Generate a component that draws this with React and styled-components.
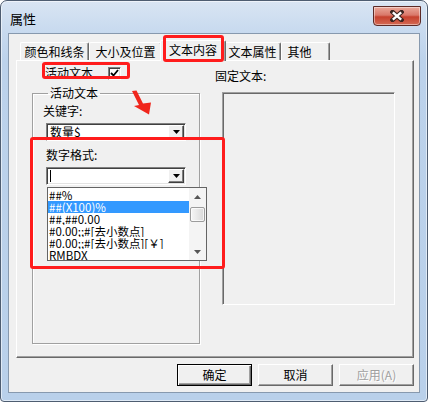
import React from 'react';
import styled, { createGlobalStyle } from 'styled-components';

const GlobalStyle = createGlobalStyle`
  html, body {
    margin: 0;
    padding: 0;
    background: #ffffff;
  }
  body {
    font-family: "Noto Sans CJK SC", "Liberation Sans", sans-serif;
    font-size: 12px;
    color: #000;
  }
`;

const formats = [
  '##%',
  '##(X100)%',
  '##,##0.00',
  '#0.00;;#[去小数点]',
  '#0.00;;#[去小数点][￥]',
  'RMBDX',
];

const tabs = [
  { label: '颜色和线条', w: 69 },
  { label: '大小及位置', w: 73 },
  { label: '文本内容', w: 66, active: true },
  { label: '文本属性', w: 57 },
  { label: '其他', w: 49, pr: 12 },
];

// window frame
const Window = styled.div`
  box-sizing: border-box;
  width: 428px;
  height: 402px;
  display: flex;
  flex-direction: column;
  padding: 0 7px 8px 7px;
  border: 1px solid #4e5d71;
  border-radius: 7px 7px 4px 4px;
  background: linear-gradient(180deg, #d9e5f3 0px, #c8daef 30px, #bcd2eb 60px, #b9d0ea 100%);
  box-shadow: inset 0 0 0 1px rgba(255, 255, 255, 0.55);
`;

const TitleBar = styled.div`
  height: 32px;
  flex: none;
  display: flex;
  justify-content: space-between;
  align-items: flex-start;
  padding-left: 2px;
`;

const Title = styled.div`
  margin-top: 10px;
  font-size: 13px;
  line-height: 16px;
  color: #000;
`;

const CloseButton = styled.div`
  width: 46px;
  height: 18px;
  margin: 5px -1px 0 0;
  display: flex;
  align-items: center;
  justify-content: center;
  border: 1px solid #5c2a26;
  border-radius: 0 0 4px 4px;
  background: linear-gradient(180deg, #eaa89a 0%, #d9786a 45%, #c6412e 55%, #d46a54 100%);
  box-shadow: inset 0 0 0 1px rgba(255, 255, 255, 0.45);
`;

const Client = styled.div`
  flex: 1;
  display: flex;
  flex-direction: column;
  padding: 6px 5px 0 7px;
  border: 1px solid #8799ae;
  background: #f0f0f0;
`;

// tabs
const TabRow = styled.div`
  position: relative;
  z-index: 1;
  height: 20px;
  display: flex;
  align-items: flex-end;
  padding-left: 4px;
`;

const Tab = styled.div`
  position: relative;
  box-sizing: border-box;
  width: ${(p) => p.$w}px;
  height: ${(p) => (p.$active ? 21 : 18)}px;
  margin: 0 ${(p) => (p.$active ? -2 : 0)}px ${(p) => (p.$active ? -1 : 0)}px;
  z-index: ${(p) => (p.$active ? 2 : 1)};
  display: flex;
  align-items: center;
  justify-content: center;
  padding-right: ${(p) => p.$pr || 0}px;
  padding-bottom: ${(p) => (p.$active ? 2 : 0)}px;
  border: 1px solid;
  border-bottom: none;
  border-color: #ffffff #696969 #696969 #ffffff;
  border-radius: 2px 2px 0 0;
  box-shadow: inset -1px 0 0 #a0a0a0;
  background: #f0f0f0;
  line-height: 14px;
  white-space: nowrap;

  ${(p) =>
    p.$active &&
    `
    &::after {
      content: '';
      position: absolute;
      left: 2px;
      top: -6px;
      width: 61px;
      height: 27px;
      box-sizing: border-box;
      border: 3px solid #ff1c1c;
      border-radius: 3px;
    }
  `}
`;

const Panel = styled.div`
  position: relative;
  box-sizing: border-box;
  height: 298px;
  flex: none;
  display: grid;
  grid-template-columns: 168px 180px;
  column-gap: 15px;
  align-items: start;
  padding-left: 15px;
  border: 1px solid;
  border-color: #ffffff #696969 #696969 #ffffff;
  box-shadow: inset -1px -1px 0 #a0a0a0;
  background: #f0f0f0;
`;

const Column = styled.div`
  display: flex;
  flex-direction: column;
  align-items: flex-start;
`;

const CheckRow = styled.label`
  position: relative;
  display: flex;
  align-items: center;
  gap: 15px;
  height: 14px;
  margin: 5px 0 0 13px;
  line-height: 14px;

  &::after {
    content: '';
    position: absolute;
    left: -3px;
    top: -4px;
    width: 88px;
    height: 17px;
    box-sizing: border-box;
    border: 3px solid #ff1c1c;
    border-radius: 3px;
  }
`;

const CheckBox = styled.span`
  box-sizing: border-box;
  width: 13px;
  height: 13px;
  display: flex;
  align-items: center;
  justify-content: center;
  border: 1px solid;
  border-color: #808080 #ffffff #ffffff #808080;
  box-shadow: inset 1px 1px 0 #404040, inset -1px -1px 0 #e3e3e3;
  background: #fff;
`;

const GroupBox = styled.fieldset`
  box-sizing: border-box;
  width: 168px;
  height: 258px;
  margin: 6px 0 0 0;
  padding: 3px 0 0 10px;
  border: 1px solid #a0a0a0;
  box-shadow: 1px 1px 0 #fff, inset 1px 1px 0 #fff;
  display: flex;
  flex-direction: column;
  align-items: flex-start;

  legend {
    margin-left: 5px;
    padding: 0 2px;
    line-height: 14px;
  }
`;

const Label = styled.div`
  line-height: 14px;
  margin: ${(p) => p.$top || 0}px 0 0 ${(p) => p.$indent || 0}px;
`;

const FormatSection = styled.div`
  position: relative;
  display: flex;
  flex-direction: column;
  align-items: flex-start;

  &::after {
    content: '';
    position: absolute;
    left: -13px;
    top: -4px;
    width: 195px;
    height: 132px;
    box-sizing: border-box;
    border: 3px solid #ff1c1c;
    border-radius: 3px;
    pointer-events: none;
  }
`;

const Combo = styled.div`
  position: relative;
  box-sizing: border-box;
  width: 140px;
  height: 18px;
  margin: ${(p) => p.$top || 0}px 0 0 ${(p) => p.$indent || 0}px;
  display: flex;
  align-items: center;
  padding: 0 1px 0 2px;
  border: 1px solid;
  border-color: #808080 #ffffff #ffffff #808080;
  box-shadow: inset 1px 1px 0 #404040, inset -1px -1px 0 #e3e3e3;
  background: #fff;
  line-height: 14px;
`;

const ComboText = styled.span`
  flex: 1;
  padding-left: 1px;
  white-space: nowrap;
`;

const Caret = styled.span`
  width: 1px;
  height: 12px;
  margin-left: 1px;
  background: #000;
  flex: none;
`;

const DropButton = styled.span`
  box-sizing: border-box;
  width: 16px;
  height: 14px;
  flex: none;
  display: flex;
  align-items: center;
  justify-content: center;
  border: 1px solid;
  border-color: #ffffff #404040 #404040 #ffffff;
  box-shadow: inset -1px -1px 0 #808080;
  background: #f0f0f0;
`;

const DropList = styled.div`
  position: absolute;
  z-index: 3;
  left: 0;
  top: 19px;
  box-sizing: border-box;
  width: 160px;
  height: 74px;
  display: flex;
  border: 1px solid #646464;
  background: #fff;
`;

const Items = styled.div`
  flex: 1;
  padding-top: 1px;
`;

const Item = styled.div`
  height: 12px;
  padding-left: 1px;
  line-height: 12px;
  font-size: 11.5px;
  white-space: nowrap;
  overflow: hidden;
  color: ${(p) => (p.$selected ? '#fff' : '#000')};
  background: ${(p) => (p.$selected ? '#3399ff' : 'transparent')};
`;

const ScrollBar = styled.div`
  width: 17px;
  flex: none;
  display: flex;
  flex-direction: column;
  align-items: center;
  background: #f4f4f4;
`;

const ScrollArrow = styled.div`
  height: 17px;
  width: 17px;
  display: flex;
  align-items: center;
  justify-content: center;
`;

const ScrollTrack = styled.div`
  flex: 1;
  width: 100%;
  display: flex;
  justify-content: center;
  padding-top: 2px;
`;

const Thumb = styled.div`
  box-sizing: border-box;
  width: 15px;
  height: 15px;
  border: 1px solid #9c9c9c;
  border-radius: 2px;
  background: linear-gradient(90deg, #f6f6f6 0%, #e8e8e8 50%, #d8d8d8 100%);
  box-shadow: inset 0 0 0 1px rgba(255, 255, 255, 0.7);
`;

const FixedBox = styled.div`
  box-sizing: border-box;
  width: 173px;
  height: 213px;
  margin: 9px 0 0 7px;
  border: 1px solid;
  border-color: #a0a0a0 #ffffff #ffffff #a0a0a0;
  box-shadow: inset 1px 1px 0 #696969;
  background: #f0f0f0;
`;

const ArrowMark = styled.svg`
  position: absolute;
  left: 112px;
  top: 28px;
  pointer-events: none;
`;

// bottom buttons
const ButtonRow = styled.div`
  display: flex;
  justify-content: flex-end;
  gap: 6px;
  margin-top: 6px;
`;

const Button = styled.div`
  box-sizing: border-box;
  width: 75px;
  height: 22px;
  display: flex;
  align-items: center;
  justify-content: center;
  border: 1px solid;
  border-color: ${(p) => (p.$default ? '#000' : '#ffffff #696969 #696969 #ffffff')};
  box-shadow: ${(p) =>
    p.$default
      ? 'inset 1px 1px 0 #fff, inset -1px -1px 0 #696969, inset -2px -2px 0 #a0a0a0'
      : 'inset -1px -1px 0 #a0a0a0'};
  background: #f0f0f0;
  line-height: 14px;
  color: ${(p) => (p.$disabled ? '#a0a0a0' : '#000')};
  text-shadow: ${(p) => (p.$disabled ? '1px 1px 0 #fff' : 'none')};
`;

const DownTriangle = () => (
  <svg width="7" height="4" viewBox="0 0 7 4">
    <path d="M0 0 H7 L3.5 4 Z" fill="#000" />
  </svg>
);

const App = () => {
  return (
    <>
      <GlobalStyle />
      <Window>
        <TitleBar>
          <Title>属性</Title>
          <CloseButton>
            <svg width="14" height="12" viewBox="0 0 14 12">
              <path d="M2.5 2 L11.5 10 M11.5 2 L2.5 10" stroke="#3b2420" strokeWidth="4.4" strokeLinecap="square" />
              <path d="M2.8 2.3 L11.2 9.7 M11.2 2.3 L2.8 9.7" stroke="#ffffff" strokeWidth="2.4" />
            </svg>
          </CloseButton>
        </TitleBar>
        <Client>
          <TabRow>
            {tabs.map((t) => (
              <Tab key={t.label} $w={t.w} $pr={t.pr} $active={t.active}>
                {t.label}
              </Tab>
            ))}
          </TabRow>
          <Panel>
            <Column>
              <CheckRow>
                活动文本
                <CheckBox>
                  <svg width="9" height="8" viewBox="0 0 9 8">
                    <path d="M1 4 L3.5 6.5 L8 1" stroke="#000" strokeWidth="1.8" fill="none" />
                  </svg>
                </CheckBox>
              </CheckRow>
              <GroupBox>
                <legend>活动文本</legend>
                <Label $top={1}>关键字:</Label>
                <Combo $top={5} $indent={3}>
                  <ComboText>数量$</ComboText>
                  <DropButton>
                    <DownTriangle />
                  </DropButton>
                </Combo>
                <FormatSection>
                  <Label $top={7} $indent={3}>数字格式:</Label>
                  <Combo $top={5} $indent={3}>
                    <Caret />
                    <ComboText />
                    <DropButton>
                      <DownTriangle />
                    </DropButton>
                    <DropList>
                      <Items>
                        {formats.map((f, i) => (
                          <Item key={f} $selected={i === 1}>
                            {f}
                          </Item>
                        ))}
                      </Items>
                      <ScrollBar>
                        <ScrollArrow>
                          <svg width="7" height="4" viewBox="0 0 7 4">
                            <path d="M0 4 H7 L3.5 0 Z" fill="#555" />
                          </svg>
                        </ScrollArrow>
                        <ScrollTrack>
                          <Thumb />
                        </ScrollTrack>
                        <ScrollArrow>
                          <svg width="7" height="4" viewBox="0 0 7 4">
                            <path d="M0 0 H7 L3.5 4 Z" fill="#555" />
                          </svg>
                        </ScrollArrow>
                      </ScrollBar>
                    </DropList>
                  </Combo>
                </FormatSection>
              </GroupBox>
            </Column>
            <Column>
              <Label $top={8}>固定文本:</Label>
              <FixedBox />
            </Column>
            <ArrowMark width="24" height="28" viewBox="0 0 24 28">
              <path d="M3 2 L7.5 1.5 L14 14.5 L22 13.5 L20 25.5 L5 17 L10 16 Z" fill="#f0261c" />
            </ArrowMark>
          </Panel>
          <ButtonRow>
            <Button $default>确定</Button>
            <Button>取消</Button>
            <Button $disabled>应用(A)</Button>
          </ButtonRow>
        </Client>
      </Window>
    </>
  );
};

export default App;
